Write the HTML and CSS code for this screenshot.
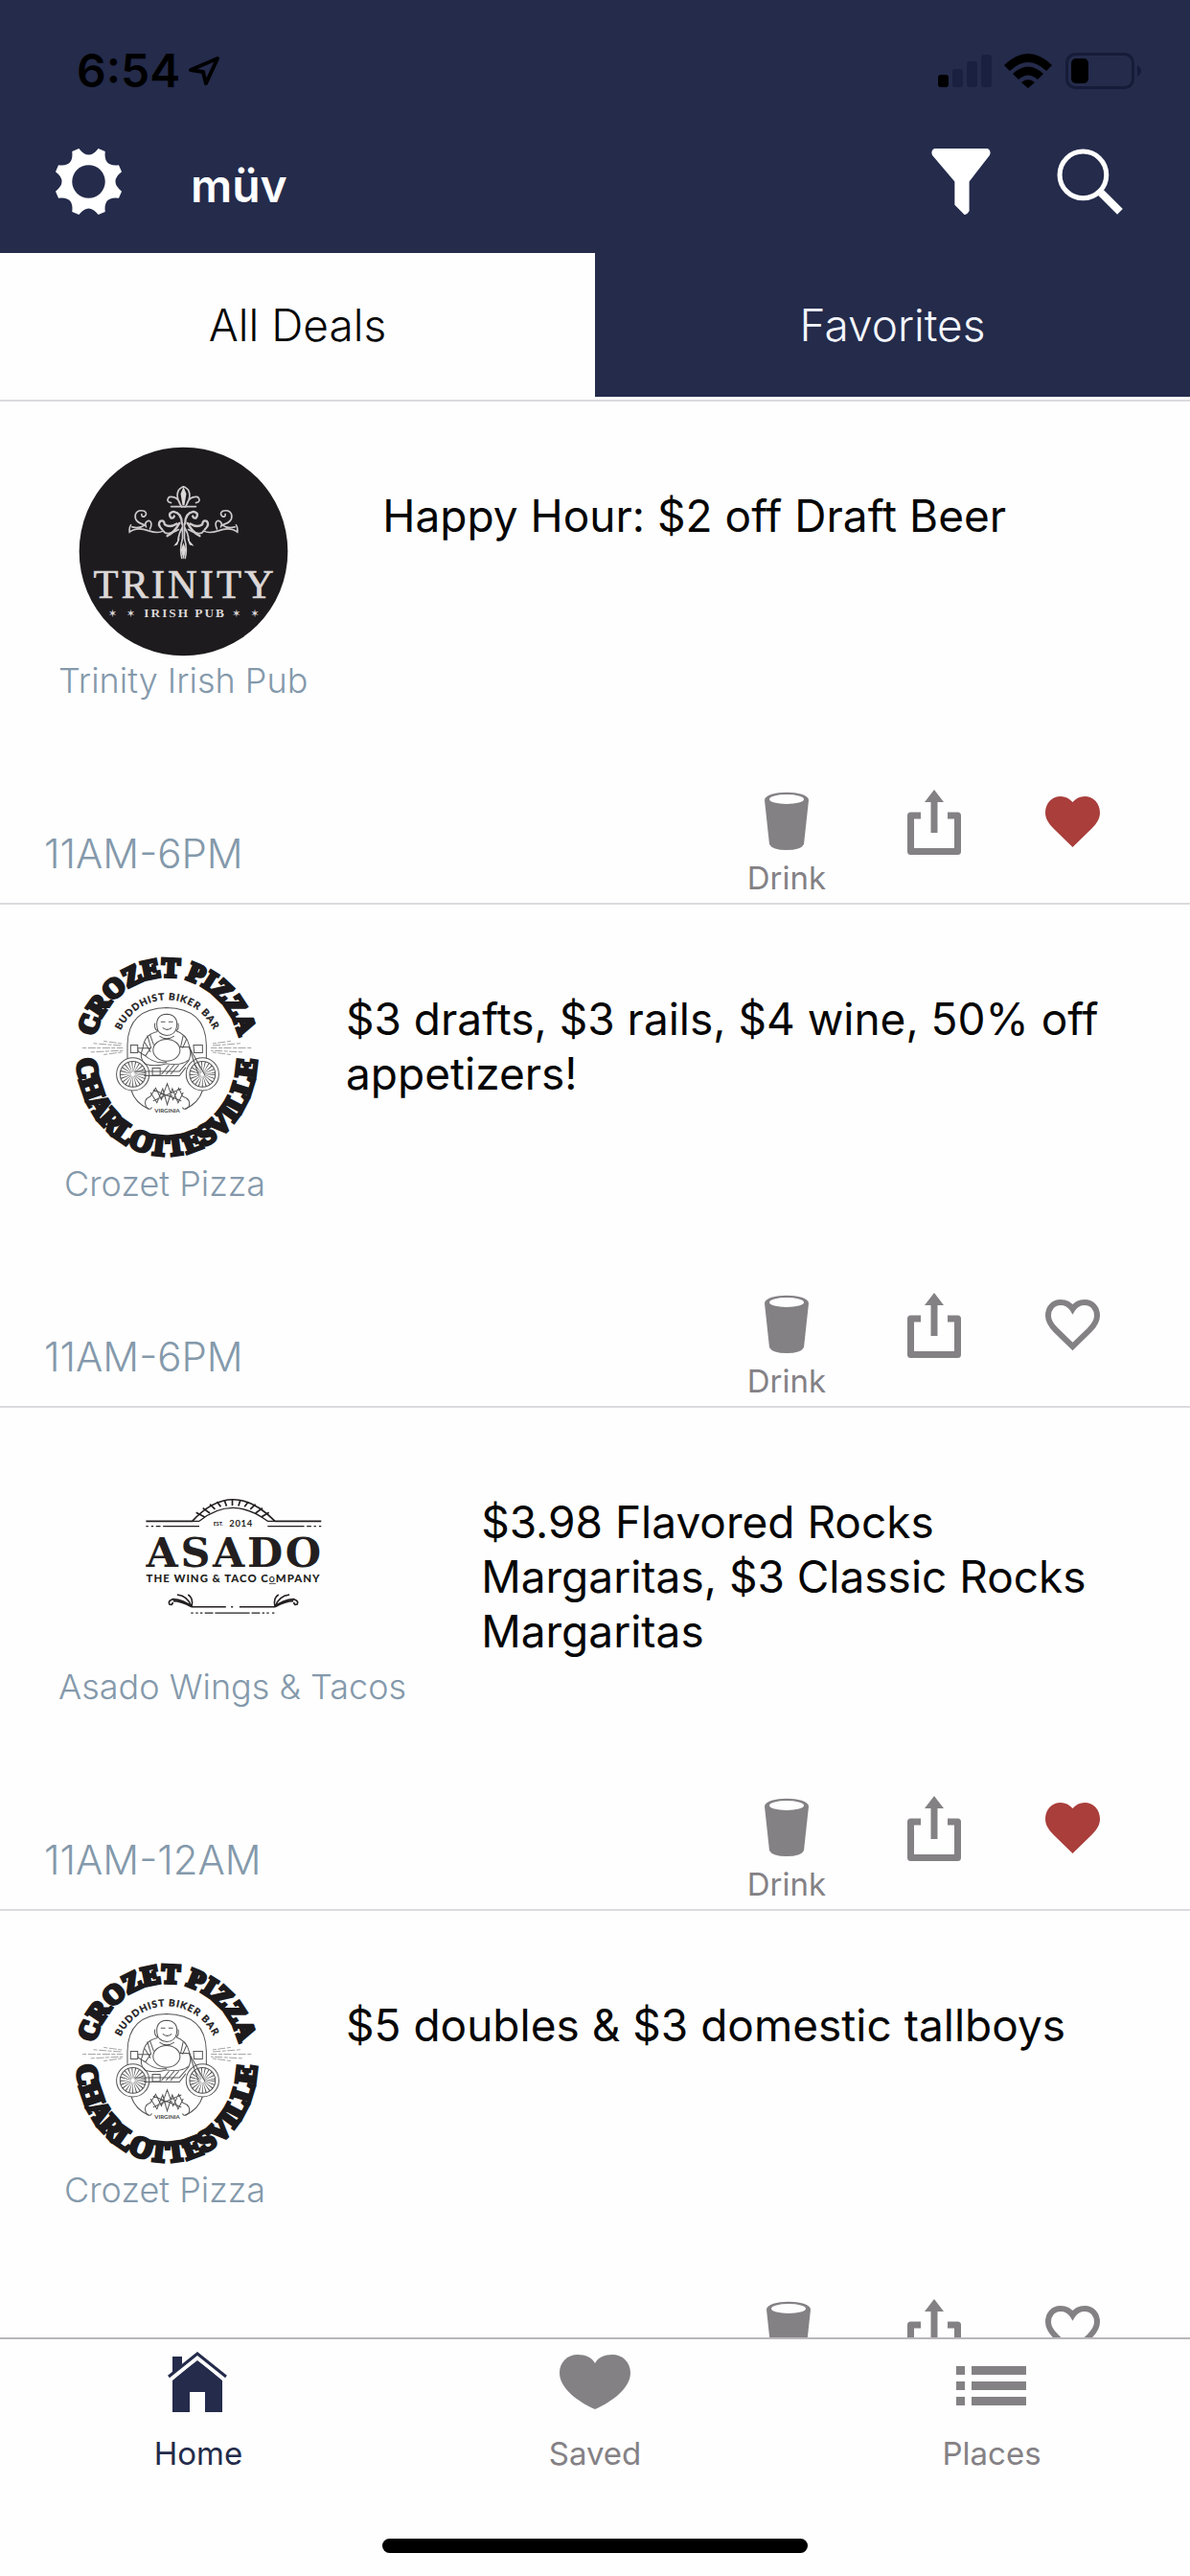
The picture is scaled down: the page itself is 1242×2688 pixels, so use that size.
FILE: index.html
```html
<!DOCTYPE html>
<html lang="en">
<head>
<meta charset="utf-8">
<meta name="viewport" content="width=device-width, initial-scale=1">
<title>müv</title>
<link rel="stylesheet" href="styles.css">
</head>
<body>
<svg class="defs" aria-hidden="true">
  <defs>
    <symbol id="cup" viewBox="0 0 62 70">
      <path fill="currentColor" d="M8 11C8 0 54 0 54 11L49 57Q46 63 31 63Q16 63 13 57Z"/>
      <ellipse cx="31" cy="10" rx="18" ry="5" fill="#fefefe"/>
    </symbol>
    <symbol id="share" viewBox="0 0 62 70">
      <path fill="none" stroke="currentColor" stroke-width="7" stroke-linejoin="round" d="M17 27H6.500V64.500H55.500V27H45"/>
      <path fill="currentColor" d="M31 0L41 13H34.500V45H27.500V13H21Z"/>
    </symbol>
    <symbol id="heart" viewBox="0 0 62 70">
      <path fill="currentColor" d="M31.500 60L12 41C6 35 3 30 3 24C3 14 10 7 19 7C24 7 28 9 31.500 13C35 9 39 7 44 7C53 7 60 14 60 24C60 30 57 35 51 41Z"/>
    </symbol>
    <symbol id="heart-line" viewBox="0 0 62 70">
      <path fill="none" stroke="currentColor" stroke-width="6" d="M31.500 56L14 39C8 33 6 29 6 24C6 16 11 10 19 10C25 10 29 13 31.500 17C34 13 38 10 44 10C52 10 57 16 57 24C57 29 55 33 49 39Z"/>
    </symbol>
    <symbol id="logo-crozet" viewBox="69 33 654 654">
      <path id="arc-top" fill="none" d="M169 363A232 246 0 0 1 633 363"/>
      <path id="arc-mid" fill="none" d="M239 363A163 174 0 0 1 565 363"/>
      <path id="arc-low" fill="none" d="M121 363A280 311 0 0 0 681 363"/>
      <g fill="#1c1a1c" stroke="#1c1a1c">
        <text class="crozet-top" stroke-width="11"><textPath href="#arc-top" startOffset="50%" text-anchor="middle">CROZET PIZZA</textPath></text>
        <text class="crozet-low" stroke-width="11"><textPath href="#arc-low" startOffset="50%" text-anchor="middle">CHARLOTTESVILLE</textPath></text>
        <text class="crozet-mid" stroke-width="1"><textPath href="#arc-mid" startOffset="50%" text-anchor="middle">BUDDHIST BIKER BAR</textPath></text>
      </g>
      <g fill="none" stroke="#555" stroke-width="3">
        <path d="M278 372V330Q280 216 400 214Q522 216 524 330V372M290 472Q302 510 345 530M512 472Q500 510 458 530"/>
        <circle cx="295" cy="421" r="51"/><circle cx="295" cy="421" r="40"/>
        <circle cx="512" cy="421" r="51"/><circle cx="512" cy="421" r="40"/>
        <circle cx="295" cy="421" r="23" stroke-width="34" stroke-dasharray="2 5"/>
        <circle cx="512" cy="421" r="23" stroke-width="34" stroke-dasharray="2 5"/>
        <path d="M370 272Q366 236 400 234Q436 236 432 272Q428 300 400 300Q372 298 370 272ZM382 258H396M406 258H420M388 276Q402 288 416 276M364 262Q360 280 372 286M436 262Q440 280 430 286"/>
        <path d="M372 288Q330 296 326 340Q312 372 334 390Q370 398 400 388Q444 396 470 376Q480 350 470 330Q462 296 430 286"/>
        <ellipse cx="400" cy="346" rx="42" ry="34"/>
        <path d="M340 300L352 340M348 296L360 330M332 322L350 352M452 300L444 336M462 312L450 340M378 302Q400 318 424 302M330 360Q360 390 400 384M310 340H350L334 364L312 350ZM440 336H470L520 424M470 336L500 424M484 330H512V354H486ZM288 330H310V354H288ZM300 412H440L470 378M330 426H440L460 400M356 402H380V424H356ZM384 422L408 392M398 422L424 392M412 422L438 392"/>
        <path d="M350 490L366 464L384 500L402 450L420 500L438 464L450 490M350 478L370 510L388 466L402 516L418 466L436 510L452 478M358 470L446 504M358 504L446 466M350 490Q326 500 336 522Q350 536 354 524M450 490Q478 500 470 522Q452 536 450 524"/>
      </g>
      <g fill="none" stroke="#777" stroke-width="2">
        <path d="M138 339H264M172 325L262 332M164 352L264 347M204 318L262 326M204 360L262 352M664 339H538M630 325L540 332M636 352L538 347M600 318L540 326M600 360L540 352" stroke-dasharray="12 5 24 4"/>
      </g>
      <text class="crozet-state" x="402" y="541" text-anchor="middle" fill="#444">VIRGINIA</text>
    </symbol>
  </defs>
</svg>

<header class="top">
  <div class="status">
    <span class="clock">6:54</span>
    <svg class="locate" viewBox="0 0 34 32" aria-hidden="true"><path fill="none" stroke="#000" stroke-width="4" stroke-linejoin="round" d="M31 3L3 15L16 17L19 29Z"/></svg>
    <svg class="gauges" viewBox="979 55 213 38" aria-hidden="true">
      <rect x="979" y="78" width="11" height="13" rx="3"/>
      <g fill="#1a2140"><rect x="994" y="72" width="11" height="19" rx="3"/><rect x="1009" y="64" width="11" height="27" rx="3"/><rect x="1024" y="57" width="11" height="34" rx="3"/></g>
      <path d="M1048 68Q1073 44 1098 68L1092 74Q1073 56 1054 74Z"/>
      <path d="M1057 77Q1073 62 1089 77L1083 83Q1073 74 1063 83Z"/>
      <path d="M1066 86Q1073 80 1080 86L1073 92Z"/>
      <rect x="1113.500" y="56.500" width="69" height="35" rx="9" fill="none" stroke="#161b38" stroke-width="3"/>
      <path fill="#161b38" d="M1187 68Q1191 71 1191 74Q1191 77 1187 80Z"/>
      <rect x="1118" y="61" width="18" height="26" rx="5"/>
    </svg>
  </div>
  <div class="nav">
    <button class="icon-btn" type="button" aria-label="Settings">
      <svg viewBox="0 0 68 68"><path fill="#fff" fill-rule="evenodd" d="M17 3L24 0Q34 13 44 0L51 3Q49 19 65 17L68 24Q55 34 68 44L65 51Q49 49 51 65L44 68Q34 55 24 68L17 65Q19 49 3 51L0 44Q13 34 0 24L3 17Q19 19 17 3ZM34 17A17 17 0 1 0 34 51A17 17 0 1 0 34 17Z"/></svg>
    </button>
    <h1 class="brand">müv</h1>
    <button class="icon-btn" type="button" aria-label="Filter">
      <svg viewBox="0 0 68 68"><path fill="#fff" d="M5 0H60Q64 2 62 7L41 34V64Q39 68 36 68L26 58V34L3 7Q1 2 5 0Z"/></svg>
    </button>
    <button class="icon-btn" type="button" aria-label="Search">
      <svg viewBox="0 0 68 68"><circle cx="27" cy="27" r="24" fill="none" stroke="#fff" stroke-width="5"/><path fill="none" stroke="#fff" stroke-width="8" d="M44 44L65 65"/></svg>
    </button>
  </div>
</header>

<div class="tabs" role="tablist">
  <button class="tab" type="button" role="tab" aria-selected="true">All Deals</button>
  <button class="tab tab-dark" type="button" role="tab" aria-selected="false">Favorites</button>
</div>

<main class="deals">
  <article class="deal">
    <div class="deal-main">
      <div class="venue">
        <svg class="logo" viewBox="123 48 656 658" aria-label="Trinity Irish Pub logo">
          <circle cx="451" cy="377" r="327" fill="#1d1b1e"/>
          <g id="scroll" fill="none" stroke="#cfcacb" stroke-width="5" stroke-linecap="round">
            <path d="M446 238Q424 206 436 184Q446 174 451 174M440 226Q430 202 406 206Q394 220 412 224M412 236H451M446 398Q438 370 448 336V290M434 342Q436 320 448 300M436 308Q396 330 388 312Q372 322 342 312Q304 298 282 316Q280 302 286 294"/>
            <path d="M290 300Q314 306 330 294Q296 286 300 262Q306 244 328 250Q340 258 328 268Q318 268 320 260M346 306Q356 284 342 280Q326 286 334 300" stroke-width="5"/>
            <path d="M446 290Q446 256 420 252Q400 256 412 272Q420 274 422 266M384 308Q368 292 378 282Q390 276 392 292Q408 304 430 290M400 328Q424 316 438 288" stroke-width="7"/>
          </g>
          <use href="#scroll" transform="translate(902 0) scale(-1 1)"/>
          <path fill="#ddd8d8" d="M451 174L460 196L454 232H448L442 196ZM451 350L459 372L451 402L443 372ZM420 360L440 334L432 356ZM484 360L462 334L470 356Z"/>
          <g fill="#dcd7d7" text-anchor="middle">
            <text class="trinity-name" x="456" y="522" stroke="#dcd7d7" stroke-width="2">TRINITY</text>
            <text class="trinity-sub" x="456" y="584">IRISH PUB</text>
            <text class="trinity-stars" x="229" y="584">✶</text><text class="trinity-stars" x="286" y="584">✶</text><text class="trinity-stars" x="617" y="584">✶</text><text class="trinity-stars" x="675" y="584">✶</text>
          </g>
        </svg>
        <span class="venue-name">Trinity Irish Pub</span>
      </div>
      <h2 class="title">Happy Hour: $2 off Draft Beer</h2>
    </div>
    <div class="deal-foot">
      <span class="hours">11AM-6PM</span>
      <div class="actions">
        <span class="kind"><svg class="glyph"><use href="#cup"/></svg>Drink</span>
        <button class="act" type="button" aria-label="Share"><svg class="glyph"><use href="#share"/></svg></button>
        <button class="act act-on" type="button" aria-label="Saved"><svg class="glyph"><use href="#heart"/></svg></button>
      </div>
    </div>
  </article>

  <article class="deal">
    <div class="deal-main">
      <div class="venue">
        <svg class="logo" aria-label="Crozet Pizza logo"><use href="#logo-crozet"/></svg>
        <span class="venue-name">Crozet Pizza</span>
      </div>
      <h2 class="title">$3 drafts, $3 rails, $4 wine, 50% off appetizers!</h2>
    </div>
    <div class="deal-foot">
      <span class="hours">11AM-6PM</span>
      <div class="actions">
        <span class="kind"><svg class="glyph"><use href="#cup"/></svg>Drink</span>
        <button class="act" type="button" aria-label="Share"><svg class="glyph"><use href="#share"/></svg></button>
        <button class="act" type="button" aria-label="Save"><svg class="glyph"><use href="#heart-line"/></svg></button>
      </div>
    </div>
  </article>

  <article class="deal">
    <div class="deal-main">
      <div class="venue">
        <svg class="logo" viewBox="273 -42 654 654" aria-label="Asado logo">
          <g fill="none" stroke="#231f20" stroke-width="5">
            <path d="M331 171H475Q600 36 733 171H877"/>
            <path d="M497 171Q600 88 710 171H733M497 171H475" stroke-width="4"/>
            <path d="M487 144L514 158M508 130L530 146M530 118L546 134M552 110L564 126M575 105L582 124M600 103V122M625 105L619 124M650 110L638 126M672 118L656 134M694 130L672 146M714 144L690 158" stroke-width="5"/>
            <path d="M384 187H497M710 187H824M331 187H338M347 187H354M362 187H376M832 187H846M854 187H861M870 187H877" stroke-width="4"/>
            <path d="M473 438H580M596 438H602M622 438H733" stroke-width="5"/>
            <path d="M546 457H654M514 457H540M500 457H507M486 457H493M471 457H478M660 457H686M693 457H700M707 457H714M724 457H731" stroke-width="4"/>
            <path id="leaf" d="M473 438Q450 416 414 414Q398 420 404 430Q414 434 414 424M473 438Q462 404 428 400M473 438Q480 410 462 400M473 438Q440 420 416 420"/>
            <use href="#leaf" transform="translate(1206 0) scale(-1 1)"/>
          </g>
          <g fill="#231f20" text-anchor="middle">
            <text class="asado-est" x="556" y="185">EST.</text>
            <text class="asado-year" x="627" y="188">2014</text>
            <text class="asado-name" x="608" y="312">ASADO</text>
            <text class="asado-sub" x="603" y="362">THE WING &amp; TACO C<tspan class="asado-o">O</tspan>MPANY</text>
          </g>
        </svg>
        <span class="venue-name">Asado Wings &amp; Tacos</span>
      </div>
      <h2 class="title">$3.98 Flavored Rocks Margaritas, $3 Classic Rocks Margaritas</h2>
    </div>
    <div class="deal-foot">
      <span class="hours">11AM-12AM</span>
      <div class="actions">
        <span class="kind"><svg class="glyph"><use href="#cup"/></svg>Drink</span>
        <button class="act" type="button" aria-label="Share"><svg class="glyph"><use href="#share"/></svg></button>
        <button class="act act-on" type="button" aria-label="Saved"><svg class="glyph"><use href="#heart"/></svg></button>
      </div>
    </div>
  </article>

  <article class="deal">
    <div class="deal-main">
      <div class="venue">
        <svg class="logo" aria-label="Crozet Pizza logo"><use href="#logo-crozet"/></svg>
        <span class="venue-name">Crozet Pizza</span>
      </div>
      <h2 class="title">$5 doubles &amp; $3 domestic tallboys</h2>
    </div>
    <div class="deal-foot">
      <span class="hours"></span>
      <div class="actions">
        <span class="kind"><svg class="glyph"><use href="#cup"/></svg></span>
        <button class="act" type="button" aria-label="Share"><svg class="glyph"><use href="#share"/></svg></button>
        <button class="act" type="button" aria-label="Save"><svg class="glyph"><use href="#heart-line"/></svg></button>
      </div>
    </div>
  </article>
</main>

<footer class="dock">
  <nav class="dock-nav">
    <a class="dock-item dock-item-on" href="#home" aria-current="page">
      <svg class="dock-icon" viewBox="0 0 76 64" aria-hidden="true">
        <path fill="currentColor" d="M11 5H21V13L11 23ZM11 29L37 9L63 29V63H45V42H29V63H11Z"/>
        <path fill="none" stroke="#fefefe" stroke-width="5" d="M7 30L37 5L67 30"/>
        <path fill="none" stroke="currentColor" stroke-width="3" d="M7 26L37 2L67 26"/>
      </svg>
      Home
    </a>
    <a class="dock-item" href="#saved">
      <svg class="dock-icon" viewBox="0 0 76 64" aria-hidden="true"><path fill="currentColor" d="M38 60C20 52 1 38 1 22C1 11 9 3 20 3C28 3 35 6 38 12C41 6 48 3 56 3C67 3 75 11 75 22C75 38 56 52 38 60Z"/></svg>
      Saved
    </a>
    <a class="dock-item" href="#places">
      <svg class="dock-icon" viewBox="0 0 76 64" aria-hidden="true"><path fill="currentColor" d="M1 15H10V24H1ZM17 15H74V24H17ZM1 31H10V40H1ZM17 31H74V40H17ZM1 47H10V56H1ZM17 47H74V56H17Z"/></svg>
      Places
    </a>
  </nav>
  <div class="home-bar"></div>
</footer>
</body>
</html>
```
FILE: styles.css
```css
:root {
  --navy: #242b4b;
  --paper: #fefefe;
  --gray: #848185;
  --slate: #8499ab;
}

* { box-sizing: border-box; }

body {
  margin: 0;
  height: 100vh;
  display: flex;
  flex-direction: column;
  background: var(--paper);
  color: #060606;
  font-family: Inter, "Liberation Sans", sans-serif;
}

button {
  margin: 0;
  padding: 0;
  border: 0;
  background: none;
  color: inherit;
  font: inherit;
}

svg { display: block; }

.defs { position: absolute; width: 0; height: 0; }

.top { background: var(--navy); flex: none; }

.status {
  display: flex;
  align-items: center;
  padding: 50px 50px 0 80px;
}

.clock {
  color: #000;
  font-size: 48px;
  line-height: 48px;
  font-weight: 600;
}

.locate { width: 34px; height: 32px; margin-left: 8px; }

.gauges { width: 213px; height: 38px; margin-left: auto; }

.nav {
  display: flex;
  align-items: flex-end;
  gap: 64px;
  padding: 57px 70px 40px 58px;
}

.icon-btn svg { width: 69px; height: 69px; }

.brand {
  flex: 1;
  margin: 0 0 0 8px;
  color: #fff;
  font-size: 48px;
  line-height: 60px;
  font-weight: 600;
}

.tabs {
  flex: none;
  display: grid;
  grid-template-columns: 1fr 1fr;
  padding-bottom: 3px;
  border-bottom: 2px solid #dcdade;
}

.tab {
  height: 150px;
  font-size: 46px;
  font-weight: 300;
}

.tab-dark { background: var(--navy); color: #f4f6ff; }

.deals {
  flex: 1;
  min-height: 0;
  overflow-y: auto;
  scrollbar-width: none;
}

.deal {
  display: flex;
  flex-direction: column;
  justify-content: space-between;
  min-height: 525px;
  padding: 47px 92px 6px 46px;
  border-bottom: 2px solid #dcdade;
}

.deal-main {
  display: flex;
  align-items: flex-start;
  gap: 78px;
  padding-left: 15px;
}

.venue {
  flex: none;
  display: flex;
  flex-direction: column;
  align-items: center;
  gap: 4px;
  min-width: 222px;
}

.logo { width: 219px; height: 219px; }

.venue-name {
  color: var(--slate);
  font-size: 36px;
  line-height: 42px;
  font-weight: 300;
}

.title {
  margin: 44px 0 0;
  font-size: 46px;
  line-height: 57px;
  font-weight: 400;
}

.deal-foot {
  display: flex;
  align-items: flex-end;
  justify-content: space-between;
}

.hours {
  margin-bottom: 20px;
  color: var(--slate);
  font-size: 42px;
  line-height: 50px;
  font-weight: 300;
}

.actions {
  display: flex;
  align-items: flex-start;
  gap: 82px;
  min-height: 112px;
  color: var(--gray);
}

.kind {
  display: flex;
  flex-direction: column;
  align-items: center;
  gap: 2px;
  min-width: 78px;
  font-size: 33px;
  line-height: 40px;
}

.glyph { width: 62px; height: 70px; }

.act-on { color: #a93e3b; }

.dock {
  flex: none;
  background: var(--paper);
  border-top: 2px solid #b9b7bb;
}

.dock-nav {
  display: grid;
  grid-template-columns: repeat(3, 1fr);
  padding-top: 13px;
}

.dock-item {
  display: flex;
  flex-direction: column;
  align-items: center;
  gap: 22px;
  color: var(--gray);
  font-size: 33px;
  line-height: 40px;
  text-decoration: none;
}

.dock-item-on { color: var(--navy); }

.dock-icon { width: 76px; height: 64px; }

.home-bar {
  width: 444px;
  height: 15px;
  margin: 69px auto 24px;
  border-radius: 8px;
  background: #000;
}

/* lettering inside the venue logos */
.trinity-name { font: 128px "Liberation Serif", serif; letter-spacing: 9px; }
.trinity-sub { font: bold 40px "Liberation Serif", serif; letter-spacing: 6px; }
.trinity-stars { font: 34px "DejaVu Sans", sans-serif; }
.crozet-top { font: bold 84px "Liberation Serif", serif; }
.crozet-low { font: bold 90px "Liberation Serif", serif; }
.crozet-mid { font: bold 30px Lato, sans-serif; letter-spacing: 3px; }
.crozet-state { font: bold 18px Lato, sans-serif; }
.asado-est { font: bold 16px Lato, sans-serif; }
.asado-year { font: bold 28px Lato, sans-serif; letter-spacing: 2px; }
.asado-name { font: bold 128px "DejaVu Serif", serif; letter-spacing: 8px; }
.asado-sub { font: 900 34px Lato, sans-serif; letter-spacing: 3px; }
.asado-o { font-size: 22px; text-decoration: underline; }
```
